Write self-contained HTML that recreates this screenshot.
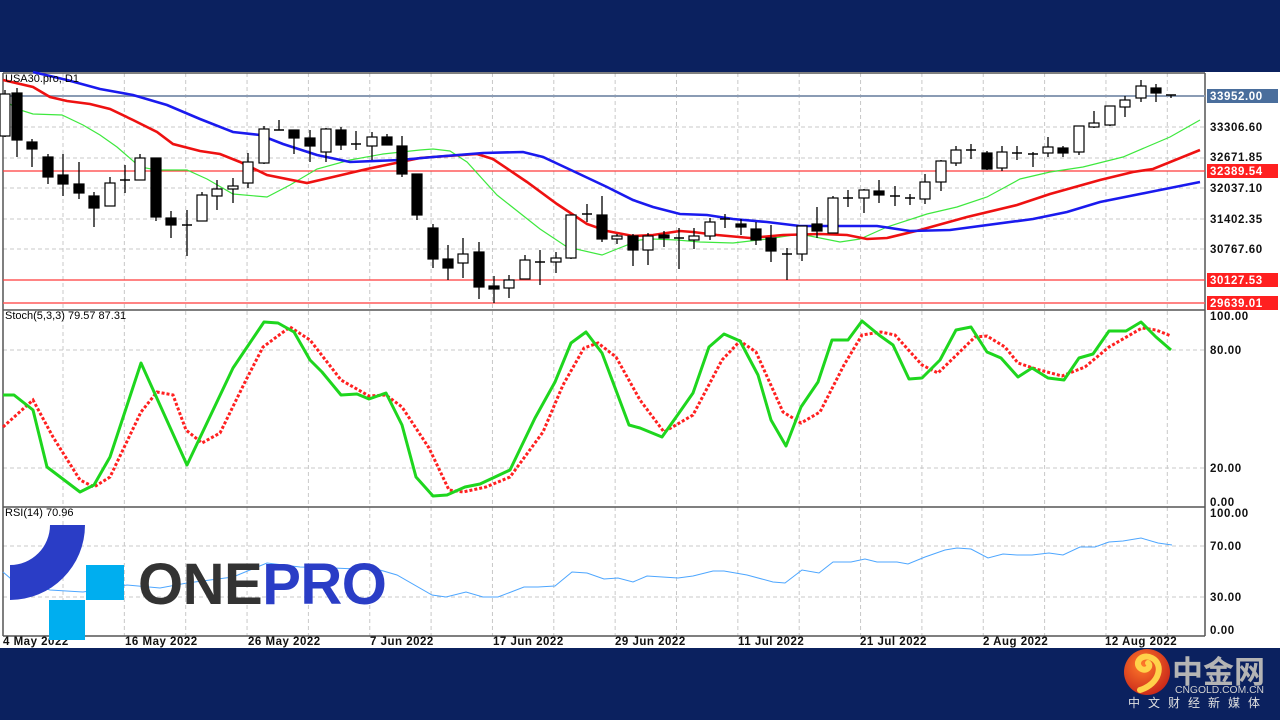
<!DOCTYPE html>
<html><head><meta charset="utf-8"><style>
html,body{margin:0;padding:0;width:1280px;height:720px;overflow:hidden;background:#0b215f;}
svg{display:block}
.t{font-family:"Liberation Sans",sans-serif;font-size:11px;fill:#000;}
.ax{font-family:"Liberation Sans",sans-serif;font-size:11.5px;font-weight:bold;fill:#111;letter-spacing:0.6px}
.dt{font-family:"Liberation Sans",sans-serif;font-size:11.5px;font-weight:bold;fill:#111;letter-spacing:0.5px}
</style></head><body>
<svg width="1280" height="720" viewBox="0 0 1280 720" xmlns="http://www.w3.org/2000/svg">
<rect x="0" y="0" width="1280" height="720" fill="#0b215f"/>
<rect x="0" y="72" width="1280" height="576" fill="#fff"/>
<g stroke="#c8c8c8" stroke-dasharray="4,3" stroke-width="1" id="grid">
<line x1="3" y1="127" x2="1205" y2="127"/><line x1="3" y1="158" x2="1205" y2="158"/><line x1="3" y1="188" x2="1205" y2="188"/><line x1="3" y1="219" x2="1205" y2="219"/><line x1="3" y1="249" x2="1205" y2="249"/>
<line x1="3" y1="350" x2="1205" y2="350"/><line x1="3" y1="468" x2="1205" y2="468"/>
<line x1="3" y1="546" x2="1205" y2="546"/><line x1="3" y1="597" x2="1205" y2="597"/>
</g>
<g id="vgrid" stroke="#c8c8c8" stroke-dasharray="4,3"></g>
<g stroke="#555" stroke-width="1.5" fill="none">
<line x1="3" y1="73" x2="1205" y2="73"/>
<line x1="3" y1="73" x2="3" y2="636"/>
<line x1="1205" y1="73" x2="1205" y2="636"/>
<line x1="3" y1="310" x2="1205" y2="310"/>
<line x1="3" y1="507" x2="1205" y2="507"/>
<line x1="3" y1="636" x2="1205" y2="636"/>
</g>
<line x1="3" y1="96" x2="1205" y2="96" stroke="#8a9bb4" stroke-width="2"/>
<line x1="3" y1="171" x2="1205" y2="171" stroke="#ff3b3b" stroke-width="1.2"/>
<line x1="3" y1="280" x2="1205" y2="280" stroke="#ff3b3b" stroke-width="1.2"/>
<line x1="3" y1="303" x2="1205" y2="303" stroke="#ff5b5b" stroke-width="1.5"/>
<polyline fill="none" stroke="#3ee83e" stroke-width="1.2" points="3,99 17,109 33,114 62,115 83,125 100,135 117,147 140,167 157,170 187,170 207,179 233,194 267,197 290,185 317,169 350,160 383,154 420,150 433,149 450,151 467,162 497,195 540,229 567,247 602,255 617,249 640,240 653,239 677,240 700,242 733,243 767,239 800,234 840,242 860,239 887,227 927,214 957,207 987,197 1020,179 1050,172 1083,167 1123,157 1170,137 1200,120"/>
<polyline fill="none" stroke="#ee1111" stroke-width="2.6" points="3,80 33,87 50,97 67,101 90,104 110,109 133,120 157,132 173,144 200,151 220,154 240,162 267,175 307,183 333,177 367,169 420,158 433,157 477,154 493,159 527,182 557,204 587,224 607,231 633,236 653,235 680,231 693,232 717,235 750,238 783,235 820,234 847,235 867,239 887,238 920,230 967,217 1017,205 1050,194 1100,180 1133,172 1153,169 1200,150"/>
<polyline fill="none" stroke="#1a1aee" stroke-width="2.6" points="33,72 67,80 100,89 133,95 167,105 200,119 233,132 260,135 283,144 317,155 350,162 400,160 433,157 483,153 523,152 543,157 573,171 607,187 633,200 653,207 680,214 707,215 733,219 767,222 800,226 877,226 910,231 950,230 1033,219 1067,212 1100,202 1150,192 1200,182"/>
<g id="candles"></g>
<polyline fill="none" stroke="#ff2020" stroke-width="3" stroke-dasharray="3,2" points="3,427 33,400 53,437 80,480 94,487 110,477 141,412 157,392 173,395 186,430 202,443 220,433 245,382 263,347 290,327 310,340 341,380 369,396 386,395 402,407 429,448 449,490 463,492 486,487 510,477 543,432 563,385 584,348 598,343 616,357 640,400 664,432 693,415 722,360 740,341 756,352 783,412 801,423 820,412 844,365 862,335 881,332 895,335 922,365 938,373 975,337 987,336 1005,347 1018,363 1036,369 1062,376 1085,367 1109,347 1142,328 1156,330 1171,336"/>
<polyline fill="none" stroke="#1ed61e" stroke-width="3" stroke-linejoin="round" points="3,395 14,395 33,410 47,467 80,492 94,485 110,457 141,363 187,465 233,368 264,322 278,323 294,332 310,360 322,372 341,395 357,394 369,399 386,393 402,425 416,477 433,496 447,495 465,487 480,484 510,470 535,418 555,382 571,343 586,332 602,353 629,425 640,428 662,437 679,413 693,393 709,347 724,334 740,341 758,375 771,420 786,446 801,407 818,382 832,340 848,340 862,321 879,335 893,345 909,379 922,378 940,360 956,330 971,327 987,352 1001,358 1018,377 1032,368 1048,378 1064,380 1079,358 1093,354 1109,331 1126,331 1141,322 1156,337 1171,350"/>
<polyline fill="none" stroke="#4da6ff" stroke-width="1" points="3,572 10,578 50,590 83,592 127,585 160,588 187,583 233,577 267,563 300,567 333,568 380,570 397,575 432,595 446,597 466,592 483,597 498,597 524,587 538,587 555,586 572,572 587,573 604,579 618,578 633,582 647,576 678,578 693,576 713,571 724,571 747,575 773,582 785,583 802,570 819,573 833,562 851,562 865,559 877,562 897,562 908,564 925,557 945,550 957,548 971,549 988,558 1003,554 1017,555 1032,555 1049,553 1063,555 1080,547 1095,547 1109,542 1123,541 1141,538 1158,543 1172,545"/>
<text class="t" x="5" y="82">USA30.pro, D1</text>
<text class="t" x="5" y="319">Stoch(5,3,3) 79.57 87.31</text>
<text class="t" x="5" y="516">RSI(14) 70.96</text>
<rect x="1207" y="89" width="71" height="14" fill="#4a6e9c"/>
<text class="ax" x="1210" y="100" style="fill:#fff">33952.00</text>
<text class="ax" x="1210" y="131">33306.60</text>
<text class="ax" x="1210" y="161">32671.85</text>
<rect x="1207" y="164" width="71" height="14" fill="#ff2020"/>
<text class="ax" x="1210" y="175" style="fill:#fff">32389.54</text>
<text class="ax" x="1210" y="192">32037.10</text>
<text class="ax" x="1210" y="223">31402.35</text>
<text class="ax" x="1210" y="253">30767.60</text>
<rect x="1207" y="273" width="71" height="14" fill="#ff2020"/>
<text class="ax" x="1210" y="284" style="fill:#fff">30127.53</text>
<rect x="1207" y="296" width="71" height="14" fill="#ff2020"/>
<text class="ax" x="1210" y="307" style="fill:#fff">29639.01</text>
<text class="ax" x="1210" y="320">100.00</text>
<text class="ax" x="1210" y="354">80.00</text>
<text class="ax" x="1210" y="472">20.00</text>
<text class="ax" x="1210" y="506">0.00</text>
<text class="ax" x="1210" y="517">100.00</text>
<text class="ax" x="1210" y="550">70.00</text>
<text class="ax" x="1210" y="601">30.00</text>
<text class="ax" x="1210" y="634">0.00</text>
<text class="dt" x="3" y="645">4 May 2022</text>
<text class="dt" x="125" y="645">16 May 2022</text>
<text class="dt" x="248" y="645">26 May 2022</text>
<text class="dt" x="370" y="645">7 Jun 2022</text>
<text class="dt" x="493" y="645">17 Jun 2022</text>
<text class="dt" x="615" y="645">29 Jun 2022</text>
<text class="dt" x="738" y="645">11 Jul 2022</text>
<text class="dt" x="860" y="645">21 Jul 2022</text>
<text class="dt" x="983" y="645">2 Aug 2022</text>
<text class="dt" x="1105" y="645">12 Aug 2022</text>
<path d="M50,525 L85,525 A75,75 0 0 1 10,600 L10,565 A40,40 0 0 0 50,525 Z" fill="#2a3dc6"/>
<rect x="86" y="565" width="38" height="35" fill="#00aeef"/>
<rect x="49" y="600" width="36" height="40" fill="#00aeef"/>
<text x="138" y="604" style="font-family:'Liberation Sans',sans-serif;font-weight:bold;font-size:58px;letter-spacing:-0.5px" fill="#333">ONE<tspan fill="#2a3dc6">PRO</tspan></text>
<defs><radialGradient id="rg" cx="0.4" cy="0.35" r="0.7"><stop offset="0" stop-color="#ff7a2a"/><stop offset="1" stop-color="#c8261a"/></radialGradient></defs>
<circle cx="1147" cy="672" r="23" fill="url(#rg)"/>
<path d="M1140,690 C1160,684 1164,664 1152,658 C1142,653 1134,662 1140,668 C1146,673 1152,666 1148,663" fill="none" stroke="#ffd24a" stroke-width="6" stroke-linecap="round"/>
<text x="1172" y="683" style="font-family:'Liberation Sans','Noto Sans CJK SC',sans-serif;font-weight:bold;font-size:31px" fill="#b4b4b4">中金网</text>
<text x="1175" y="693" textLength="89" lengthAdjust="spacingAndGlyphs" style="font-family:'Liberation Sans',sans-serif;font-size:10.5px" fill="#cfcfcf">CNGOLD.COM.CN</text>
<text x="1128" y="707" style="font-family:'Liberation Sans','Noto Sans CJK SC',sans-serif;font-size:12px;letter-spacing:8px" fill="#e0e0e0">中文财经新媒体</text>
</svg>
<script>
var vg=document.getElementById('vgrid'),ns='http://www.w3.org/2000/svg';
for(var i=0;i<19;i++){var x=63+i*61.35;var l=document.createElementNS(ns,'line');l.setAttribute('x1',x);l.setAttribute('x2',x);l.setAttribute('y1',73);l.setAttribute('y2',636);vg.appendChild(l);}
var C=[[5,'w',94,136,90,137],[17,'b',93,140,88,157],[32,'b',142,149,139,167],[48,'b',157,177,154,184],[63,'b',175,184,154,196],[79,'b',184,193,162,199],[94,'b',196,208,192,227],[110,'w',183,206,177,206],[125,'c',180,180,165,193],[140,'w',158,180,154,180],[156,'b',158,217,158,221],[171,'b',218,225,211,238],[187,'c',225,225,210,256],[202,'w',195,221,192,221],[217,'w',189,196,180,210],[233,'w',186,189,178,203],[248,'w',162,183,153,188],[264,'w',129,163,126,164],[279,'c',130,130,120,130],[294,'b',130,138,130,154],[310,'b',138,146,130,162],[326,'w',129,152,128,162],[341,'b',130,145,127,150],[356,'c',144,144,131,150],[372,'w',137,146,132,160],[387,'b',137,145,134,145],[402,'b',146,174,136,177],[417,'b',174,215,174,220],[433,'b',228,259,224,268],[448,'b',259,268,245,280],[463,'w',254,263,238,278],[479,'b',252,287,242,299],[494,'b',286,289,276,303],[509,'w',280,288,275,298],[525,'w',260,279,255,279],[540,'c',262,262,250,285],[556,'w',258,262,252,273],[571,'w',215,258,215,259],[587,'c',214,214,204,222],[602,'b',215,239,196,242],[617,'w',236,239,234,244],[633,'b',236,250,234,266],[648,'w',236,250,233,265],[664,'b',235,238,231,247],[679,'c',238,238,228,269],[694,'w',236,240,228,249],[710,'w',222,236,218,240],[725,'c',219,219,214,228],[741,'b',224,227,219,235],[756,'b',229,240,222,245],[771,'b',238,251,225,262],[787,'c',254,254,248,280],[802,'w',226,254,226,261],[817,'b',224,231,207,238],[833,'w',198,233,196,233],[848,'c',198,198,190,207],[864,'w',190,198,189,213],[879,'b',191,195,180,203],[895,'c',196,196,186,206],[910,'c',198,198,194,205],[925,'w',182,199,174,204],[941,'w',161,182,160,191],[956,'w',150,163,146,166],[971,'c',150,150,144,159],[987,'b',153,169,151,170],[1002,'w',152,168,146,171],[1017,'c',153,153,146,160],[1033,'c',154,154,152,167],[1048,'w',147,153,137,157],[1063,'b',148,153,146,157],[1079,'w',126,152,126,155],[1094,'w',123,127,111,128],[1110,'w',106,125,106,126],[1125,'w',100,107,96,117],[1141,'w',86,98,80,102],[1156,'b',88,93,84,102],[1171,'c',95,95,95,98]];
var g=document.getElementById('candles');
C.forEach(function(c){var x=c[0];var l=document.createElementNS(ns,'line');l.setAttribute('x1',x);l.setAttribute('x2',x);l.setAttribute('y1',c[4]);l.setAttribute('y2',c[5]);l.setAttribute('stroke','#000');l.setAttribute('stroke-width','1.3');g.appendChild(l);
if(c[1]=='c'){var h=document.createElementNS(ns,'line');h.setAttribute('x1',x-5);h.setAttribute('x2',x+5);h.setAttribute('y1',c[2]);h.setAttribute('y2',c[2]);h.setAttribute('stroke','#000');h.setAttribute('stroke-width','1.5');g.appendChild(h);}
else{var r=document.createElementNS(ns,'rect');r.setAttribute('x',x-5);r.setAttribute('y',c[2]);r.setAttribute('width',10);r.setAttribute('height',Math.max(2,c[3]-c[2]));r.setAttribute('fill',c[1]=='b'?'#000':'#fff');r.setAttribute('stroke','#000');r.setAttribute('stroke-width','1.2');g.appendChild(r);}});
</script>
</body></html>
